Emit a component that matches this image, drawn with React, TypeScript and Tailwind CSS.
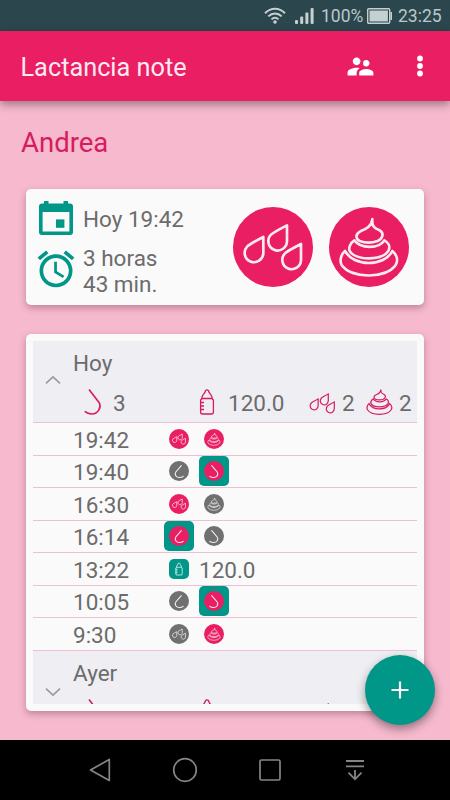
import type { ReactNode } from 'react';
import { MdAlarm, MdSupervisorAccount } from 'react-icons/md';

type EventKind = 'pee' | 'poop' | 'left' | 'right' | 'bottle';

interface Marker {
  kind: EventKind;
  active?: boolean;
  selected?: boolean;
}

interface Entry {
  time: string;
  markers: Marker[];
  amount?: string;
}

const entries: Entry[] = [
  { time: '19:42', markers: [{ kind: 'pee', active: true }, { kind: 'poop', active: true }] },
  { time: '19:40', markers: [{ kind: 'left' }, { kind: 'right', active: true, selected: true }] },
  { time: '16:30', markers: [{ kind: 'pee', active: true }, { kind: 'poop' }] },
  { time: '16:14', markers: [{ kind: 'left', active: true, selected: true }, { kind: 'right' }] },
  { time: '13:22', markers: [{ kind: 'bottle' }], amount: '120.0' },
  { time: '10:05', markers: [{ kind: 'left' }, { kind: 'right', active: true, selected: true }] },
  { time: '9:30', markers: [{ kind: 'pee' }, { kind: 'poop', active: true }] },
];

const DROP = 'M91 90V138A28 28 0 1 1 43 118Q50 111 91 90Z';

function Drops() {
  return (
    <>
      <path d={DROP} />
      <path d={DROP} transform="translate(71 -35)" />
      <path d={DROP} transform="translate(113 21)" />
    </>
  );
}

function Poop() {
  return (
    <>
      <path d="M130 36C128 60 138 64 152 70C166 78 162 94 146 102C128 108 108 108 92 102C78 94 80 80 94 73C112 66 128 58 130 36Z" />
      <path d="M76 100C64 108 58 122 62 132C80 162 160 162 179 130C184 118 178 106 166 100C150 126 94 126 76 100Z" />
      <path d="M48 132C34 144 32 164 38 174C66 216 172 216 200 174C208 160 204 144 190 132C166 180 74 180 48 132Z" />
    </>
  );
}

function Bottle() {
  return (
    <>
      <path d="M3 8C4 5 6 4.5 6.4 1.8Q8 0 9.6 1.8C10 4.5 12 5 13 8V9.5H3Z" />
      <path d="M3 9.5L1.6 11V23Q1.6 25 3.6 25H12.4Q14.4 25 14.4 23V11L13 9.5" />
      <path d="M1.6 13.5H5M1.6 17H5M1.6 20.5H5" />
    </>
  );
}

function BigButton({ children }: { children: ReactNode }) {
  return (
    <button className="h-20 w-20 rounded-full bg-[#e91e63]">
      <svg viewBox="0 0 240 240" fill="none" stroke="#fdeaf1" strokeWidth="8" strokeLinejoin="round">
        {children}
      </svg>
    </button>
  );
}

function MarkerGlyph({ kind }: { kind: EventKind }) {
  if (kind === 'pee') {
    return (
      <svg width="20" height="20" viewBox="-10 -10 260 260" fill="none" stroke="#fff" strokeOpacity="0.85" strokeWidth="10">
        <Drops />
      </svg>
    );
  }

  if (kind === 'poop') {
    return (
      <svg width="20" height="20" viewBox="-20 -22 280 280" fill="none" stroke="#fff" strokeOpacity="0.85" strokeWidth="10">
        <Poop />
      </svg>
    );
  }

  if (kind === 'bottle') {
    return (
      <svg width="20" height="20" viewBox="-12 -7 40 40" fill="none" stroke="#fff" strokeOpacity="0.9" strokeWidth="1.6">
        <Bottle />
      </svg>
    );
  }

  return (
    <svg width="20" height="20" viewBox="0 0 20 20" fill="none" stroke="#fff" strokeOpacity="0.9" strokeWidth="1.1" strokeLinecap="round">
      <path
        d="M7.7 4.7L13.2 11C14.8 13.6 12.8 16.4 9.6 16.5Q7.2 16.5 5.8 15.3"
        transform={kind === 'left' ? 'translate(20 0) scale(-1 1)' : undefined}
      />
    </svg>
  );
}

function MarkerSlot({ marker }: { marker: Marker }) {
  const shape = marker.kind === 'bottle' ? 'rounded-[5px] bg-[#009688]' : 'rounded-full';
  const tone = marker.kind === 'bottle' ? '' : marker.active ? 'bg-[#e91e63]' : 'bg-[#707070]';

  return (
    <div
      className={`flex h-[30px] w-[30px] items-center justify-center rounded-[5px] ${marker.selected ? 'bg-[#009688]' : ''}`}
    >
      <div className={`h-5 w-5 ${shape} ${tone}`}>
        <MarkerGlyph kind={marker.kind} />
      </div>
    </div>
  );
}

interface DaySummaryProps {
  title: string;
  open?: boolean;
  totals?: string[];
}

function DaySummary({ title, open = false, totals = [] }: DaySummaryProps) {
  return (
    <div className="flex h-[82px] shrink-0 border-b border-[#f0bfd2] bg-[#efeef3]">
      <div className={`w-[40px] pl-3 ${open ? 'pt-[34px]' : 'pt-[36px]'}`}>
        <svg width="16" height="10" viewBox="0 0 16 10" fill="none" stroke="#9b9b9e" strokeWidth="1.7">
          <path d={open ? 'M1 8.3L8 1.8L15 8.3' : 'M1 1.7L8 8.2L15 1.7'} />
        </svg>
      </div>
      <div className="flex-1 pt-2">
        <h2 className="h-10 leading-[28px]">{title}</h2>
        <div className="flex h-[26px] leading-[28px]">
          <div className="flex w-[126px] pl-[11px]">
            <svg width="18" height="26" viewBox="0 0 18 26" fill="none" stroke="#d81b60" strokeWidth="1.6">
              <path d="M5 0.5L15.4 14C17.5 18.5 14 25 8 25Q3.5 25 0.8 22.3" />
            </svg>
            {totals[0] ? <span className="ml-[11px]">{totals[0]}</span> : null}
          </div>
          <div className="flex w-[110px]">
            <svg width="16" height="26" viewBox="0 0 16 26" fill="none" stroke="#d81b60" strokeWidth="1.3">
              <Bottle />
            </svg>
            {totals[1] ? <span className="ml-[13px]">{totals[1]}</span> : null}
          </div>
          <div className="flex w-[57px]">
            <svg width="26" height="26" viewBox="27 20 182 182" fill="none" stroke="#d81b60" strokeWidth="8.5">
              <Drops />
            </svg>
            {totals[2] ? <span className="ml-[7px]">{totals[2]}</span> : null}
          </div>
          <div className="flex">
            <svg width="27" height="26" viewBox="30 32 180 178" fill="none" stroke="#d81b60" strokeWidth="8.5">
              <Poop />
            </svg>
            {totals[3] ? <span className="ml-[6px]">{totals[3]}</span> : null}
          </div>
        </div>
      </div>
    </div>
  );
}

function StatusBar() {
  return (
    <div className="flex h-[31px] items-center bg-[#2b474d] pl-[264px] text-[17.5px] text-[#b9c8ca]">
      <svg width="22" height="17" viewBox="0 0 22 17" fill="none" stroke="#c4d0d1" strokeWidth="2">
        <path d="M1 6.2C7 0.2 15 0.2 21 6.2M4.3 9.4C8.2 5.6 13.8 5.6 17.7 9.4M7.5 12.4C9.6 10.4 12.4 10.4 14.5 12.4" />
        <circle cx="11" cy="15" r="1.8" fill="#c4d0d1" stroke="none" />
      </svg>
      <svg className="ml-[9px]" width="19" height="16" viewBox="0 0 19 16" fill="#c4d0d1">
        <rect x="0" y="12" width="3" height="4" rx="1" />
        <rect x="5.2" y="8.5" width="3" height="7.5" rx="1" />
        <rect x="10.4" y="4.5" width="3" height="11.5" rx="1" />
        <rect x="15.6" y="0" width="3" height="16" rx="1" />
      </svg>
      <span className="ml-[7px] mt-[2px] w-[45px]">100%</span>
      <svg className="ml-[1px]" width="25" height="16" viewBox="0 0 25 16">
        <rect x="0.7" y="0.7" width="22" height="14.6" rx="1" fill="none" stroke="#c4d0d1" strokeWidth="1.4" />
        <rect x="2.5" y="2.5" width="18.4" height="11" fill="#c4d0d1" />
        <rect x="23.4" y="4" width="1.6" height="8" fill="#c4d0d1" />
      </svg>
      <span className="ml-[6px] mt-[2px]">23:25</span>
    </div>
  );
}

function AppBar() {
  return (
    <header className="z-10 flex h-[70px] shrink-0 items-center bg-[#e91e63] pl-[20.5px] pr-[25px] text-[#ffeaf2] shadow-[0_3px_9px_rgba(0,0,0,0.4)]">
      <h1 className="flex-1 pt-1 text-[25.3px] leading-8">Lactancia note</h1>
      <MdSupervisorAccount className="mr-[39px] text-white" size={31} />
      <svg width="10" height="24" viewBox="0 0 10 24" fill="#fff">
        <circle cx="5" cy="4.5" r="2.9" />
        <circle cx="5" cy="12" r="2.9" />
        <circle cx="5" cy="19.5" r="2.9" />
      </svg>
    </header>
  );
}

function LastEventCard() {
  return (
    <section className="mt-[29px] flex h-[116px] rounded-[5px] bg-[#fafafa] shadow-[0_3px_7px_rgba(90,30,50,0.35)]">
      <div className="w-[57px] pl-[13px] pt-3">
        <svg width="34" height="34" viewBox="0 0 34 34" fill="#009688">
          <path fillRule="evenodd" d="M3 2.5H5V0H9.5V2.5H24.5V0H29V2.5H31Q34 2.5 34 5.5V31Q34 34 31 34H3Q0 34 0 31V5.5Q0 2.5 3 2.5ZM3.6 11V30.4H30.4V11Z" />
          <path d="M17 18.4H25.4V26.8H17Z" />
        </svg>
        <MdAlarm className="-ml-[5px] mt-[12px] text-[#009688]" size={44} />
      </div>
      <div className="flex-1 pt-[17px] leading-[26px]">
        <p>Hoy 19:42</p>
        <p className="mt-[13px]">
          3 horas
          <br />
          43 min.
        </p>
      </div>
      <div className="flex gap-4 pr-[15px] pt-[18px]">
        <BigButton>
          <Drops />
        </BigButton>
        <BigButton>
          <Poop />
        </BigButton>
      </div>
    </section>
  );
}

function HistoryCard() {
  return (
    <section className="mt-[29px] h-[377px] rounded-[5px] bg-[#fafafa] p-[7px] shadow-[0_3px_7px_rgba(90,30,50,0.35)]">
      <div className="flex h-[363px] flex-col overflow-hidden">
        <DaySummary title="Hoy" open totals={['3', '120.0', '2', '2']} />
        {entries.map((entry) => (
          <div key={entry.time} className="flex h-[32.5px] shrink-0 items-center border-b border-[#f0bfd2]">
            <span className="w-[131px] pl-[40px] pt-[2px] leading-[26px]">{entry.time}</span>
            <div className="flex gap-[5px]">
              {entry.markers.map((marker) => (
                <MarkerSlot key={marker.kind} marker={marker} />
              ))}
              {entry.amount ? <span className="pt-[3px] leading-[26px]">{entry.amount}</span> : null}
            </div>
          </div>
        ))}
        <DaySummary title="Ayer" />
      </div>
    </section>
  );
}

function NavBar() {
  return (
    <nav className="flex h-[60px] items-center gap-[55px] bg-black pl-[85px]">
      <svg width="30" height="30" viewBox="0 0 30 30" fill="none" stroke="#858585" strokeWidth="1.7" strokeLinejoin="round">
        <path d="M5.5 15L24.3 4.5V25.5Z" />
      </svg>
      <svg width="30" height="30" viewBox="0 0 30 30" fill="none" stroke="#858585" strokeWidth="1.7">
        <circle cx="15" cy="15" r="11.3" />
      </svg>
      <svg width="30" height="30" viewBox="0 0 30 30" fill="none" stroke="#858585" strokeWidth="1.7">
        <rect x="5" y="5" width="20" height="20" rx="1.5" />
      </svg>
      <svg width="30" height="30" viewBox="0 0 30 30" fill="none" stroke="#858585" strokeWidth="1.8">
        <path d="M6 6H24M6 11.3H24M15 15V24.3M8.5 17.7L15 24.3L21.5 17.7" />
      </svg>
    </nav>
  );
}

export default function App() {
  return (
    <div className="relative flex h-[800px] w-[450px] flex-col overflow-hidden bg-[#f6b9ce] font-['Roboto',sans-serif] text-[22.5px] text-[#6c6c6c]">
      <StatusBar />
      <AppBar />
      <main className="flex-1 px-[26px]">
        <h2 className="-ml-[5px] mt-[26px] h-[33px] text-[27.5px] leading-8 text-[#d81b60]">Andrea</h2>
        <LastEventCard />
        <HistoryCard />
      </main>
      <button className="absolute bottom-[75px] right-[15px] flex h-[70px] w-[70px] items-center justify-center rounded-full bg-[#009688] shadow-[0_4px_10px_rgba(0,0,0,0.4)]">
        <svg width="18" height="18" viewBox="0 0 18 18" fill="none" stroke="#fff" strokeWidth="2.2">
          <path d="M9 0.5V17.5M0.5 9H17.5" />
        </svg>
      </button>
      <NavBar />
    </div>
  );
}
